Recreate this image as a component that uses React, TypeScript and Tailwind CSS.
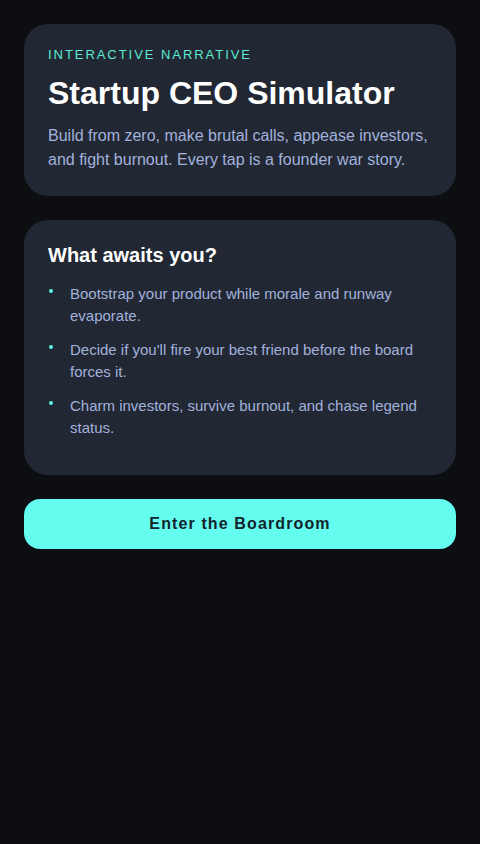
import React from 'react';

// Bullet points for the intro card
const teasers = [
  'Bootstrap your product while morale and runway evaporate.',
  "Decide if you'll fire your best friend before the board forces it.",
  'Charm investors, survive burnout, and chase legend status.',
];

const App = () => {
  return (
    <div
      className="min-h-screen w-full bg-[#0c0e12] p-6 flex flex-col gap-6"
      style={{ fontFamily: '"Liberation Sans", Arial, sans-serif' }}
    >
      {/* Hero card */}
      <div className="rounded-3xl bg-[#212833] px-6 pt-[23px] pb-6">
        <p className="text-[13px] leading-4 tracking-[0.15em] text-[#5eead4] uppercase">Interactive Narrative</p>
        <h1 className="mt-[10px] text-[32px] leading-10 font-bold text-white">Startup CEO Simulator</h1>
        <p className="mt-[11px] text-[16px] leading-6 text-[#a3b1dc]">
          Build from zero, make brutal calls, appease investors, and fight burnout. Every tap is a founder war story.
        </p>
      </div>

      {/* What awaits card */}
      <div className="rounded-3xl bg-[#212833] px-6 pt-[21px] pb-9">
        <h2 className="text-[20px] leading-7 font-bold text-white">What awaits you?</h2>
        <ul className="mt-[14px] flex flex-col gap-3">
          {teasers.map((t) => (
            <li key={t} className="flex items-start gap-[17px]">
              <span className="mt-[6px] ml-[1px] h-[4px] w-[4px] shrink-0 rounded-full bg-[#5ff5e8]" />
              <span className="text-[15px] leading-[22px] text-[#a3b1dc]">{t}</span>
            </li>
          ))}
        </ul>
      </div>

      {/* CTA */}
      <button className="h-[50px] w-full rounded-2xl bg-[#64fcee] text-[16px] font-bold tracking-[0.07em] text-[#13232b]">
        Enter the Boardroom
      </button>
    </div>
  );
};

export default App;
